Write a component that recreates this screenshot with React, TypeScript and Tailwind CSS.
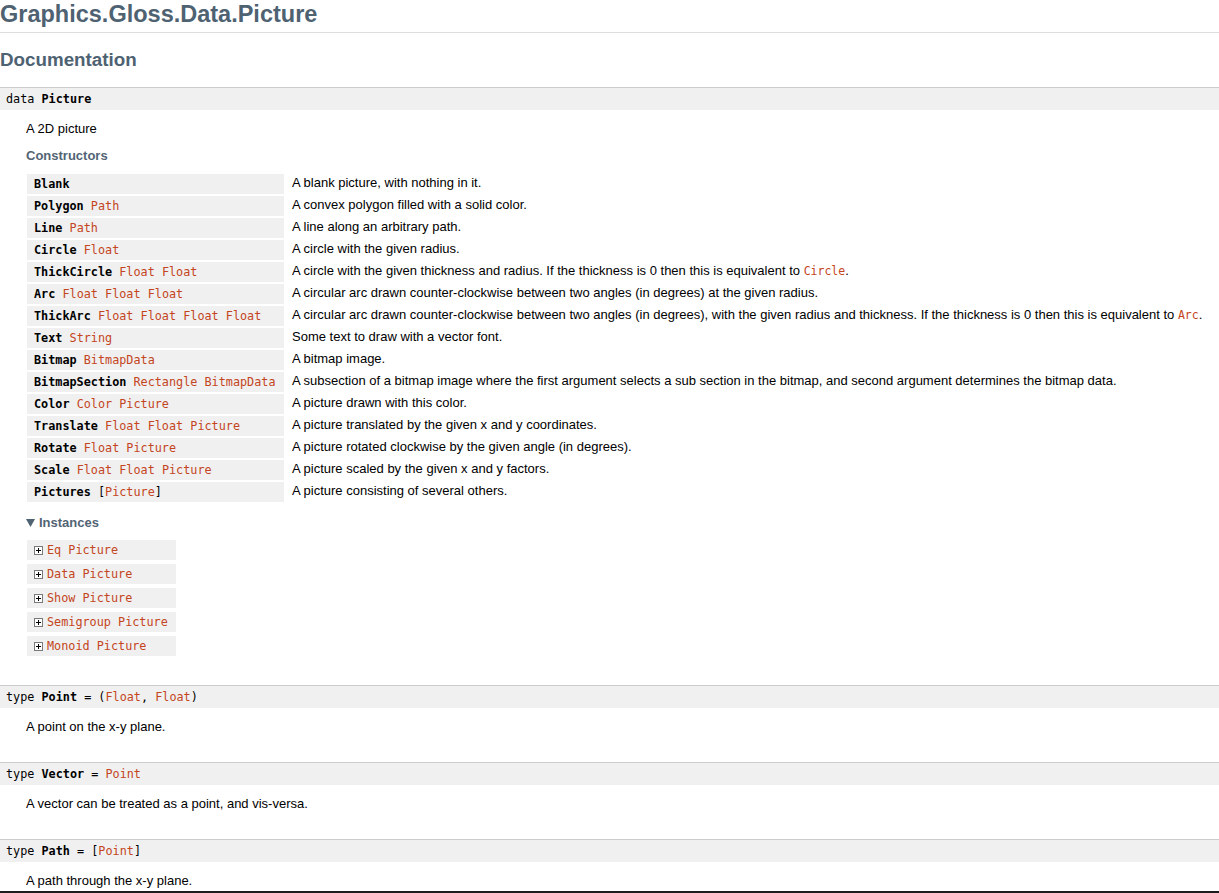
import React from "react";

const T = ({ children }: { children: React.ReactNode }) => (
  <span className="text-[#c4451d]">{children}</span>
);

type Row = { name: string; args: React.ReactNode; desc: React.ReactNode };

const rows: Row[] = [
  { name: "Blank", args: null, desc: "A blank picture, with nothing in it." },
  { name: "Polygon", args: <T>Path</T>, desc: "A convex polygon filled with a solid color." },
  { name: "Line", args: <T>Path</T>, desc: "A line along an arbitrary path." },
  { name: "Circle", args: <T>Float</T>, desc: "A circle with the given radius." },
  {
    name: "ThickCircle",
    args: (
      <>
        <T>Float</T> <T>Float</T>
      </>
    ),
    desc: (
      <>
        A circle with the given thickness and radius. If the thickness is 0 then this is equivalent to{" "}
        <code className="font-['DejaVu_Sans_Mono',monospace] text-[11.5px] text-[#c4451d]">Circle</code>.
      </>
    ),
  },
  {
    name: "Arc",
    args: (
      <>
        <T>Float</T> <T>Float</T> <T>Float</T>
      </>
    ),
    desc: "A circular arc drawn counter-clockwise between two angles (in degrees) at the given radius.",
  },
  {
    name: "ThickArc",
    args: (
      <>
        <T>Float</T> <T>Float</T> <T>Float</T> <T>Float</T>
      </>
    ),
    desc: (
      <>
        A circular arc drawn counter-clockwise between two angles (in degrees), with the given radius and thickness. If the thickness is 0 then this is equivalent to{" "}
        <code className="font-['DejaVu_Sans_Mono',monospace] text-[11.5px] text-[#c4451d]">Arc</code>.
      </>
    ),
  },
  { name: "Text", args: <T>String</T>, desc: "Some text to draw with a vector font." },
  { name: "Bitmap", args: <T>BitmapData</T>, desc: "A bitmap image." },
  {
    name: "BitmapSection",
    args: (
      <>
        <T>Rectangle</T> <T>BitmapData</T>
      </>
    ),
    desc: "A subsection of a bitmap image where the first argument selects a sub section in the bitmap, and second argument determines the bitmap data.",
  },
  {
    name: "Color",
    args: (
      <>
        <T>Color</T> <T>Picture</T>
      </>
    ),
    desc: "A picture drawn with this color.",
  },
  {
    name: "Translate",
    args: (
      <>
        <T>Float</T> <T>Float</T> <T>Picture</T>
      </>
    ),
    desc: "A picture translated by the given x and y coordinates.",
  },
  {
    name: "Rotate",
    args: (
      <>
        <T>Float</T> <T>Picture</T>
      </>
    ),
    desc: "A picture rotated clockwise by the given angle (in degrees).",
  },
  {
    name: "Scale",
    args: (
      <>
        <T>Float</T> <T>Float</T> <T>Picture</T>
      </>
    ),
    desc: "A picture scaled by the given x and y factors.",
  },
  {
    name: "Pictures",
    args: (
      <>
        [<T>Picture</T>]
      </>
    ),
    desc: "A picture consisting of several others.",
  },
];

const instances = ["Eq Picture", "Data Picture", "Show Picture", "Semigroup Picture", "Monoid Picture"];

const mono = "font-['DejaVu_Sans_Mono',monospace] text-[11.8px]";

const Plus = () => (
  <svg width="9" height="9" viewBox="0 0 9 9" className="shrink-0">
    <rect x="0.5" y="0.5" width="8" height="8" fill="#fff" stroke="#7a7a7a" />
    <path d="M2 4.5H7M4.5 2V7" stroke="#000" strokeWidth="1" />
  </svg>
);

const Bar = ({ children }: { children: React.ReactNode }) => (
  <div className={`border-t border-[#cccccc] bg-[#f0f0f0] h-[23px] leading-[22px] px-[6px] text-black whitespace-nowrap ${mono}`}>
    {children}
  </div>
);

const TypeSection = ({ sig, doc }: { sig: React.ReactNode; doc: string }) => (
  <div className="mt-[27px] first:mt-[29px]">
    <Bar>{sig}</Bar>
    <p className="pl-[26px] pt-[11px] leading-[16px]">{doc}</p>
  </div>
);

export default function App() {
  return (
    <div className="bg-white text-black font-['Liberation_Sans',Arial,sans-serif] text-[13px] min-h-[893px] overflow-hidden">
      <h1 className="text-[23.5px] font-bold leading-[28px] pb-[4px] border-b border-[#dddddd] text-[#4e6272]">
        Graphics.Gloss.Data.Picture
      </h1>
      <h2 className="mt-[16px] text-[18.8px] font-bold leading-[22px] text-[#4e6272]">Documentation</h2>

      <div className="mt-[16px]">
        <Bar>
          data <b>Picture</b>
        </Bar>
        <div className="pl-[26px] pt-[11px]">
          <p className="leading-[16px]">A 2D picture</p>
          <div className="mt-[11px] leading-[16px] font-bold text-[#526474]">Constructors</div>

          <div className="mt-[10px] ml-[1px] flex flex-col gap-[2px]">
            {rows.map((r) => (
              <div key={r.name} className="flex h-[20px]">
                <div className={`w-[257px] shrink-0 bg-[#f0f0f0] px-[7px] leading-[20px] whitespace-nowrap ${mono}`}>
                  <b>{r.name}</b>
                  {r.args ? <> {r.args}</> : null}
                </div>
                <div className="pl-[8px] leading-[18px] whitespace-nowrap">{r.desc}</div>
              </div>
            ))}
          </div>

          <div className="mt-[13px] flex items-center leading-[16px] font-bold text-[#526474]">
            <svg width="9" height="8" viewBox="0 0 9 8" className="mr-[4px]">
              <polygon points="0,0 9,0 4.5,8" fill="#4e6272" />
            </svg>
            Instances
          </div>

          <div className="mt-[9px] ml-[1px] flex flex-col gap-[4px]">
            {instances.map((i) => (
              <div key={i} className="w-[149px] h-[20px] bg-[#f0f0f0] flex items-center pl-[7px] gap-[4px]">
                <Plus />
                <span className={`${mono} text-[#c4451d] leading-[20px]`}>{i}</span>
              </div>
            ))}
          </div>
        </div>
      </div>

      <div className="flex flex-col">
        <TypeSection
          sig={
            <>
              type <b>Point</b> = (<T>Float</T>, <T>Float</T>)
            </>
          }
          doc="A point on the x-y plane."
        />
        <TypeSection
          sig={
            <>
              type <b>Vector</b> = <T>Point</T>
            </>
          }
          doc="A vector can be treated as a point, and vis-versa."
        />
        <TypeSection
          sig={
            <>
              type <b>Path</b> = [<T>Point</T>]
            </>
          }
          doc="A path through the x-y plane."
        />
      </div>

      <div className="fixed left-0 right-0 bottom-0 h-[2px] bg-[#1c1c1c]" />
    </div>
  );
}
